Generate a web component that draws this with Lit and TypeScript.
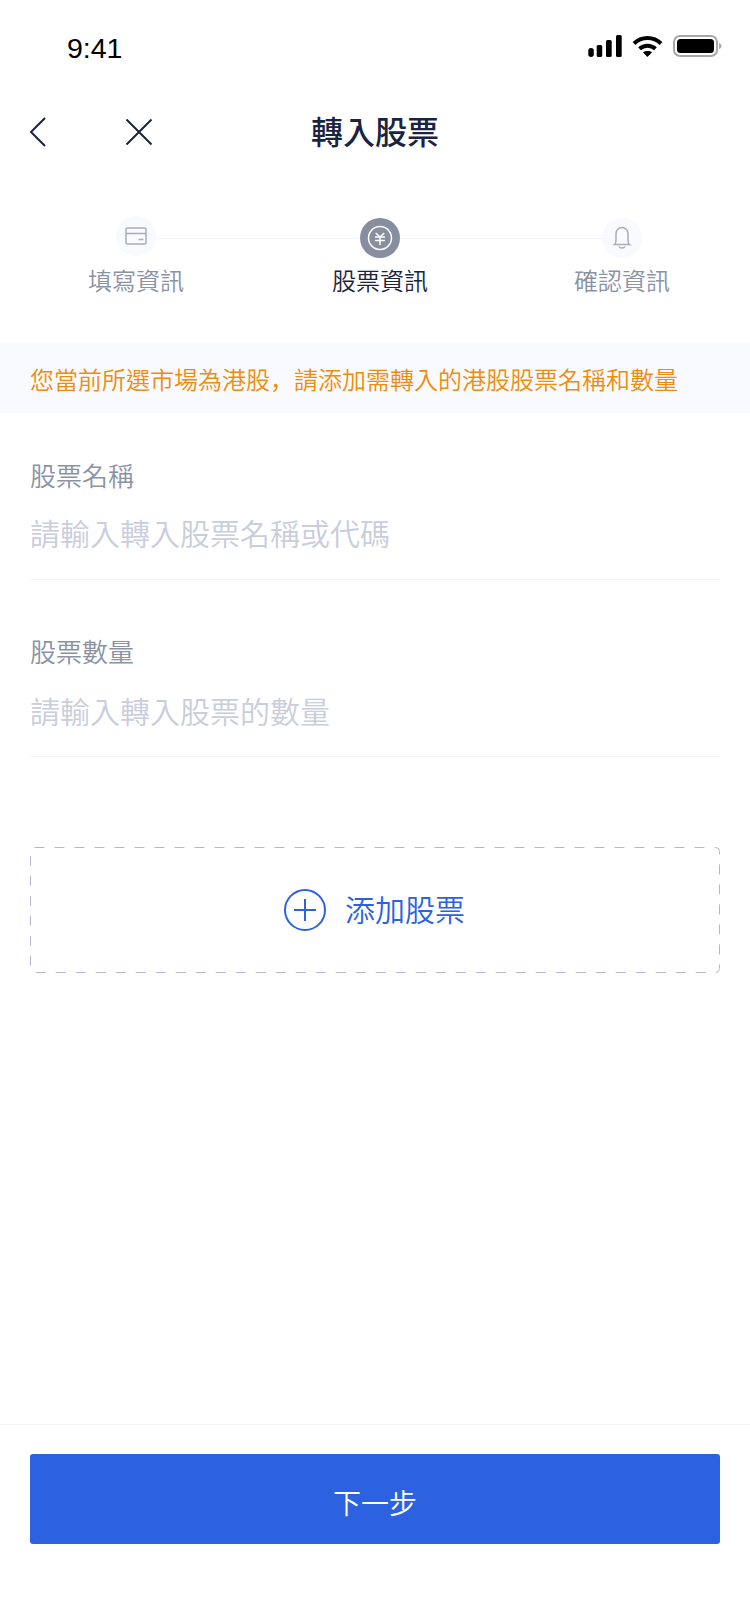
import { LitElement, html, css } from 'lit';
import { customElement } from 'lit/decorators.js';

@customElement('app-root')
export class AppRoot extends LitElement {
  static styles = css`
    :host {
      display: flex;
      flex-direction: column;
      width: 750px;
      height: 1624px;
      background: #fff;
      font-family: 'Noto Sans CJK TC', 'Liberation Sans', sans-serif;
      font-weight: 350;
      color: #1a2340;
    }
    svg { display: block; flex: none; }

    .status {
      display: flex;
      align-items: center;
      height: 88px;
      padding: 8px 28px 0 67px;
      box-sizing: border-box;
    }
    .time {
      font-family: 'Liberation Sans', Arial, sans-serif;
      font-size: 28.5px;
      font-weight: 400;
      line-height: 34px;
      color: #000;
      flex: 1;
    }
    .status-icons { display: flex; align-items: center; gap: 10px; margin-top: -4px; }

    .nav {
      display: flex;
      align-items: center;
      height: 88px;
      padding-left: 29px;
    }
    .nav .back { margin-right: 78px; }
    .nav h1 {
      margin: -4px 0 0 158px;
      font-size: 32px;
      font-weight: 500;
      line-height: 44px;
      color: #1a2340;
    }

    .steps {
      position: relative;
      display: flex;
      justify-content: space-between;
      padding: 42px 80px 0 88px;
      height: 167px;
      box-sizing: border-box;
    }
    .steps::before {
      content: '';
      position: absolute;
      left: 136px;
      right: 128px;
      top: 62px;
      height: 1px;
      background: #f2f3f8;
    }
    .step {
      position: relative;
      display: flex;
      flex-direction: column;
      align-items: center;
      width: 96px;
      font-size: 24px;
      line-height: 34px;
      color: #8a92a3;
    }
    .step.active { color: #1a2340; margin-left: 2px; }
    .dot {
      display: flex;
      align-items: center;
      justify-content: center;
      width: 40px;
      height: 40px;
      border-radius: 50%;
      background: #f9fafe;
      margin-bottom: 5px;
    }
    .step:first-child .dot { margin-top: -2px; margin-bottom: 7px; }
    .active .dot { background: #868e9f; }

    .notice {
      height: 70px;
      padding: 0 30px;
      display: flex;
      align-items: center;
      background: #f9fafe;
      font-size: 24px;
      color: #f08c0a;
      white-space: nowrap;
    }
    .sc { font-family: 'Noto Sans CJK SC', sans-serif; }

    .field {
      margin: 0 30px;
      padding-top: 44px;
      height: 122px;
      border-bottom: 1px solid #f2f3f6;
    }
    .field + .field { height: 123px; padding-top: 53px; }
    .field label {
      display: block;
      font-size: 26px;
      line-height: 36px;
      color: #8a92a3;
    }
    .field .ph {
      margin-top: 17px;
      font-size: 30px;
      line-height: 44px;
      color: #c9cddc;
    }
    .field + .field .ph { margin-top: 19px; }

    .add {
      position: relative;
      margin: 90px 30px 0;
      height: 126px;
      padding-right: 1px;
      display: flex;
      align-items: center;
      justify-content: center;
      gap: 19px;
      font-size: 30px;
      color: #2c62e0;
      box-sizing: border-box;
    }
    .add span { margin-top: -4px; }
    .add .dash { position: absolute; left: 0; top: 0; }

    .footer {
      margin-top: auto;
      height: 200px;
      box-sizing: border-box;
      padding-top: 29px;
      border-top: 1px solid #f2f3f6;
    }
    .next {
      margin: 0 30px;
      height: 90px;
      padding-top: 6px;
      box-sizing: border-box;
      display: flex;
      align-items: center;
      justify-content: center;
      background: #2c62e0;
      border-radius: 3px;
      color: #fff;
      font-size: 28px;
    }
  `;

  render() {
    return html`
      <div class="status">
        <div class="time">9:41</div>
        <div class="status-icons">
          <svg width="34" height="22" viewBox="0 0 34 22" fill="#000">
            <rect x="0.300" y="13" width="5.500" height="9" rx="2.700"></rect>
            <rect x="8.700" y="10" width="5.500" height="12" rx="1.500"></rect>
            <rect x="18" y="5" width="5.700" height="17" rx="1.500"></rect>
            <rect x="28" y="0" width="5.700" height="22" rx="1.500"></rect>
          </svg>
          <svg width="31" height="22" viewBox="-0.500 0 31 22" fill="none" stroke="#000" stroke-width="4">
            <path d="M1.500 8.500C9 1.200 21 1.200 28.500 8.500"></path>
            <path d="M7 13.700C11.700 9.600 18.300 9.600 23 13.700"></path>
            <path d="M15 22L10.400 17.300C13 15.400 17 15.400 19.600 17.300Z" fill="#000" stroke="none"></path>
          </svg>
          <svg width="49" height="22" viewBox="0 0 49 22">
            <rect x="1" y="1" width="43" height="20" rx="6" fill="none" stroke="#a8a8a8" stroke-width="2"></rect>
            <rect x="4" y="4" width="37" height="14" rx="3.500" fill="#000"></rect>
            <path d="M46 8c1.700.6 2.500 1.600 2.500 3s-.8 2.400-2.500 3z" fill="#a8a8a8"></path>
          </svg>
        </div>
      </div>

      <div class="nav">
        <svg class="back" width="18" height="30" viewBox="0 0 18 30" fill="none" stroke="#1a2340" stroke-width="2">
          <path d="M16 1L2 15L16 29"></path>
        </svg>
        <svg width="28" height="28" viewBox="0 0 28 28" fill="none" stroke="#1a2340" stroke-width="2">
          <path d="M1.500 1.500L26.500 26.500M26.500 1.500L1.500 26.500"></path>
        </svg>
        <h1>轉入股票</h1>
      </div>

      <div class="steps">
        <div class="step">
          <div class="dot">
            <svg width="22" height="18" viewBox="0 0 22 18" fill="none" stroke="#a9acbb" stroke-width="1.500">
              <rect x="1" y="1" width="20" height="16" rx="1.500"></rect>
              <path d="M1 6.500H21M13.500 12.500H18.500"></path>
            </svg>
          </div>
          填寫資訊
        </div>
        <div class="step active">
          <div class="dot">
            <svg width="26" height="26" viewBox="0 0 26 26" fill="none" stroke="#fff" stroke-width="1.500">
              <circle cx="13" cy="13" r="11.500"></circle>
              <path d="M8.700 8L13 12L17.300 8M13 12V20M8 12H18M8 15.500H18"></path>
            </svg>
          </div>
          股票資訊
        </div>
        <div class="step">
          <div class="dot">
            <svg width="22" height="24" viewBox="0 0 22 24" fill="none" stroke="#a9acbb" stroke-width="1.500">
              <path d="M3.500 18.500H18.500C17 17.500 17 16 17 14V7.500A6 6 0 0 0 5 7.500V14C5 16 5 17.500 3.500 18.500Z"></path>
              <path d="M8 20.500C9 22.500 13 22.500 14 20.500"></path>
            </svg>
          </div>
          確認資訊
        </div>
      </div>

      <div class="notice"><div>您當前所選市場為港股<span class="sc">，</span>請添加需轉入的港股股票名稱和數量</div></div>

      <div class="field">
        <label>股票名稱</label>
        <div class="ph">請輸入轉入股票名稱或代碼</div>
      </div>
      <div class="field">
        <label>股票數量</label>
        <div class="ph">請輸入轉入股票的數量</div>
      </div>

      <div class="add">
        <svg class="dash" width="690" height="126" viewBox="0 0 690 126" fill="none" stroke="#b4b8ce" stroke-width="1">
          <rect x="0.500" y="0.500" width="689" height="125" rx="4" stroke-dasharray="10 10"></rect>
        </svg>
        <svg width="42" height="42" viewBox="0 0 42 42" fill="none" stroke="#2c62e0" stroke-width="2">
          <circle cx="21" cy="21" r="20"></circle>
          <path d="M10 21H32M21 10V32"></path>
        </svg>
        <span>添加股票</span>
      </div>

      <div class="footer">
        <div class="next">下一步</div>
      </div>
    `;
  }
}
